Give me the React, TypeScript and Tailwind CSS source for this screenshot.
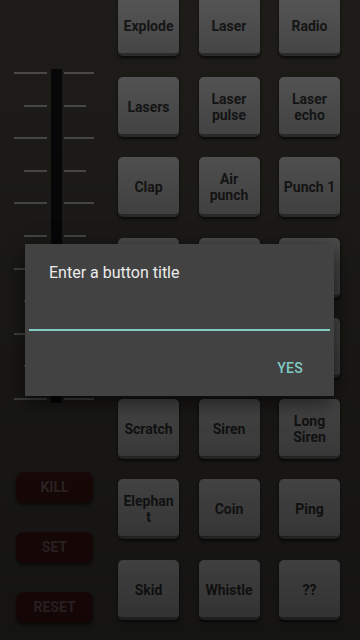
const pads = [
  "Explode", "Laser", "Radio",
  "Lasers", "Laser pulse", "Laser echo",
  "Clap", "Air punch", "Punch 1",
  "", "", "",
  "", "", "",
  "Scratch", "Siren", "Long Siren",
  "Elephant", "Coin", "Ping",
  "Skid", "Whistle", "??",
];

const ticks = Array.from({ length: 11 }, (_, i) => i % 2 === 0);

const Pad = ({ label }: { label: string }) => (
  <div className="h-[60px] rounded-[5px] bg-gradient-to-b from-[#555555] to-[#474747] border-b-[3px] border-[#2c2c2c] shadow-[0_2px_3px_rgba(0,0,0,0.7)] flex items-center justify-center px-[4px] pt-[3px] text-center">
    <span className="text-[14px] leading-[16px] font-bold text-[#151515] break-words w-full">{label}</span>
  </div>
);

const RedButton = ({ label }: { label: string }) => (
  <div className="w-[77px] h-[31px] rounded-[7px] bg-[#1d0909] shadow-[0_2px_3px_rgba(0,0,0,0.6)] flex items-center justify-center">
    <span className="text-[14px] font-bold text-[#362b2b]">{label}</span>
  </div>
);

export default function App() {
  return (
    <div className="relative w-[360px] h-[640px] overflow-hidden bg-[#1d1c19] font-['Roboto',sans-serif]">
      <div className="flex h-full">
        <div className="w-[118px] shrink-0 flex flex-col">
          <div className="flex mt-[69px] h-[334px] pl-[14px]">
            <div className="w-[33px] flex flex-col justify-between items-end py-[3px]">
              {ticks.map((long, i) => (
                <div key={i} className={`h-[2px] bg-[#4b4b4b] ${long ? "w-[33px]" : "w-[23px]"}`} />
              ))}
            </div>
            <div className="w-[11px] ml-[4px] bg-[#070707]" />
            <div className="w-[30px] ml-[2px] flex flex-col justify-between items-start py-[3px]">
              {ticks.map((long, i) => (
                <div key={i} className={`h-[2px] bg-[#4b4b4b] ${long ? "w-[30px]" : "w-[22px]"}`} />
              ))}
            </div>
          </div>
          <div className="flex flex-col gap-[29px] pl-[16px] mt-[69px]">
            <RedButton label="KILL" />
            <RedButton label="SET" />
            <RedButton label="RESET" />
          </div>
        </div>
        <div className="w-[222px] -mt-[4px] grid grid-cols-3 gap-x-[19.5px] gap-y-[20.5px] content-start">
          {pads.map((p, i) => (
            <Pad key={i} label={p} />
          ))}
        </div>
      </div>

      <div className="absolute inset-0 pointer-events-none bg-gradient-to-b from-black/0 to-black/30" />

      <div className="absolute left-[25px] top-[244px] w-[309px] h-[152px] bg-[#424242] shadow-[0_6px_20px_rgba(0,0,0,0.6)]">
        <div className="pl-[24px] pt-[19px] text-[16px] text-[#ececec] leading-[20px]">Enter a button title</div>
        <div className="ml-[4px] mr-[4px] mt-[46px] h-[2px] bg-[#80cbc4]"></div>
        <div className="flex justify-end pr-[31px] mt-[29px]">
          <span className="text-[14px] leading-[16px] font-medium text-[#80cbc4] tracking-[0.3px]">YES</span>
        </div>
      </div>
    </div>
  );
}
